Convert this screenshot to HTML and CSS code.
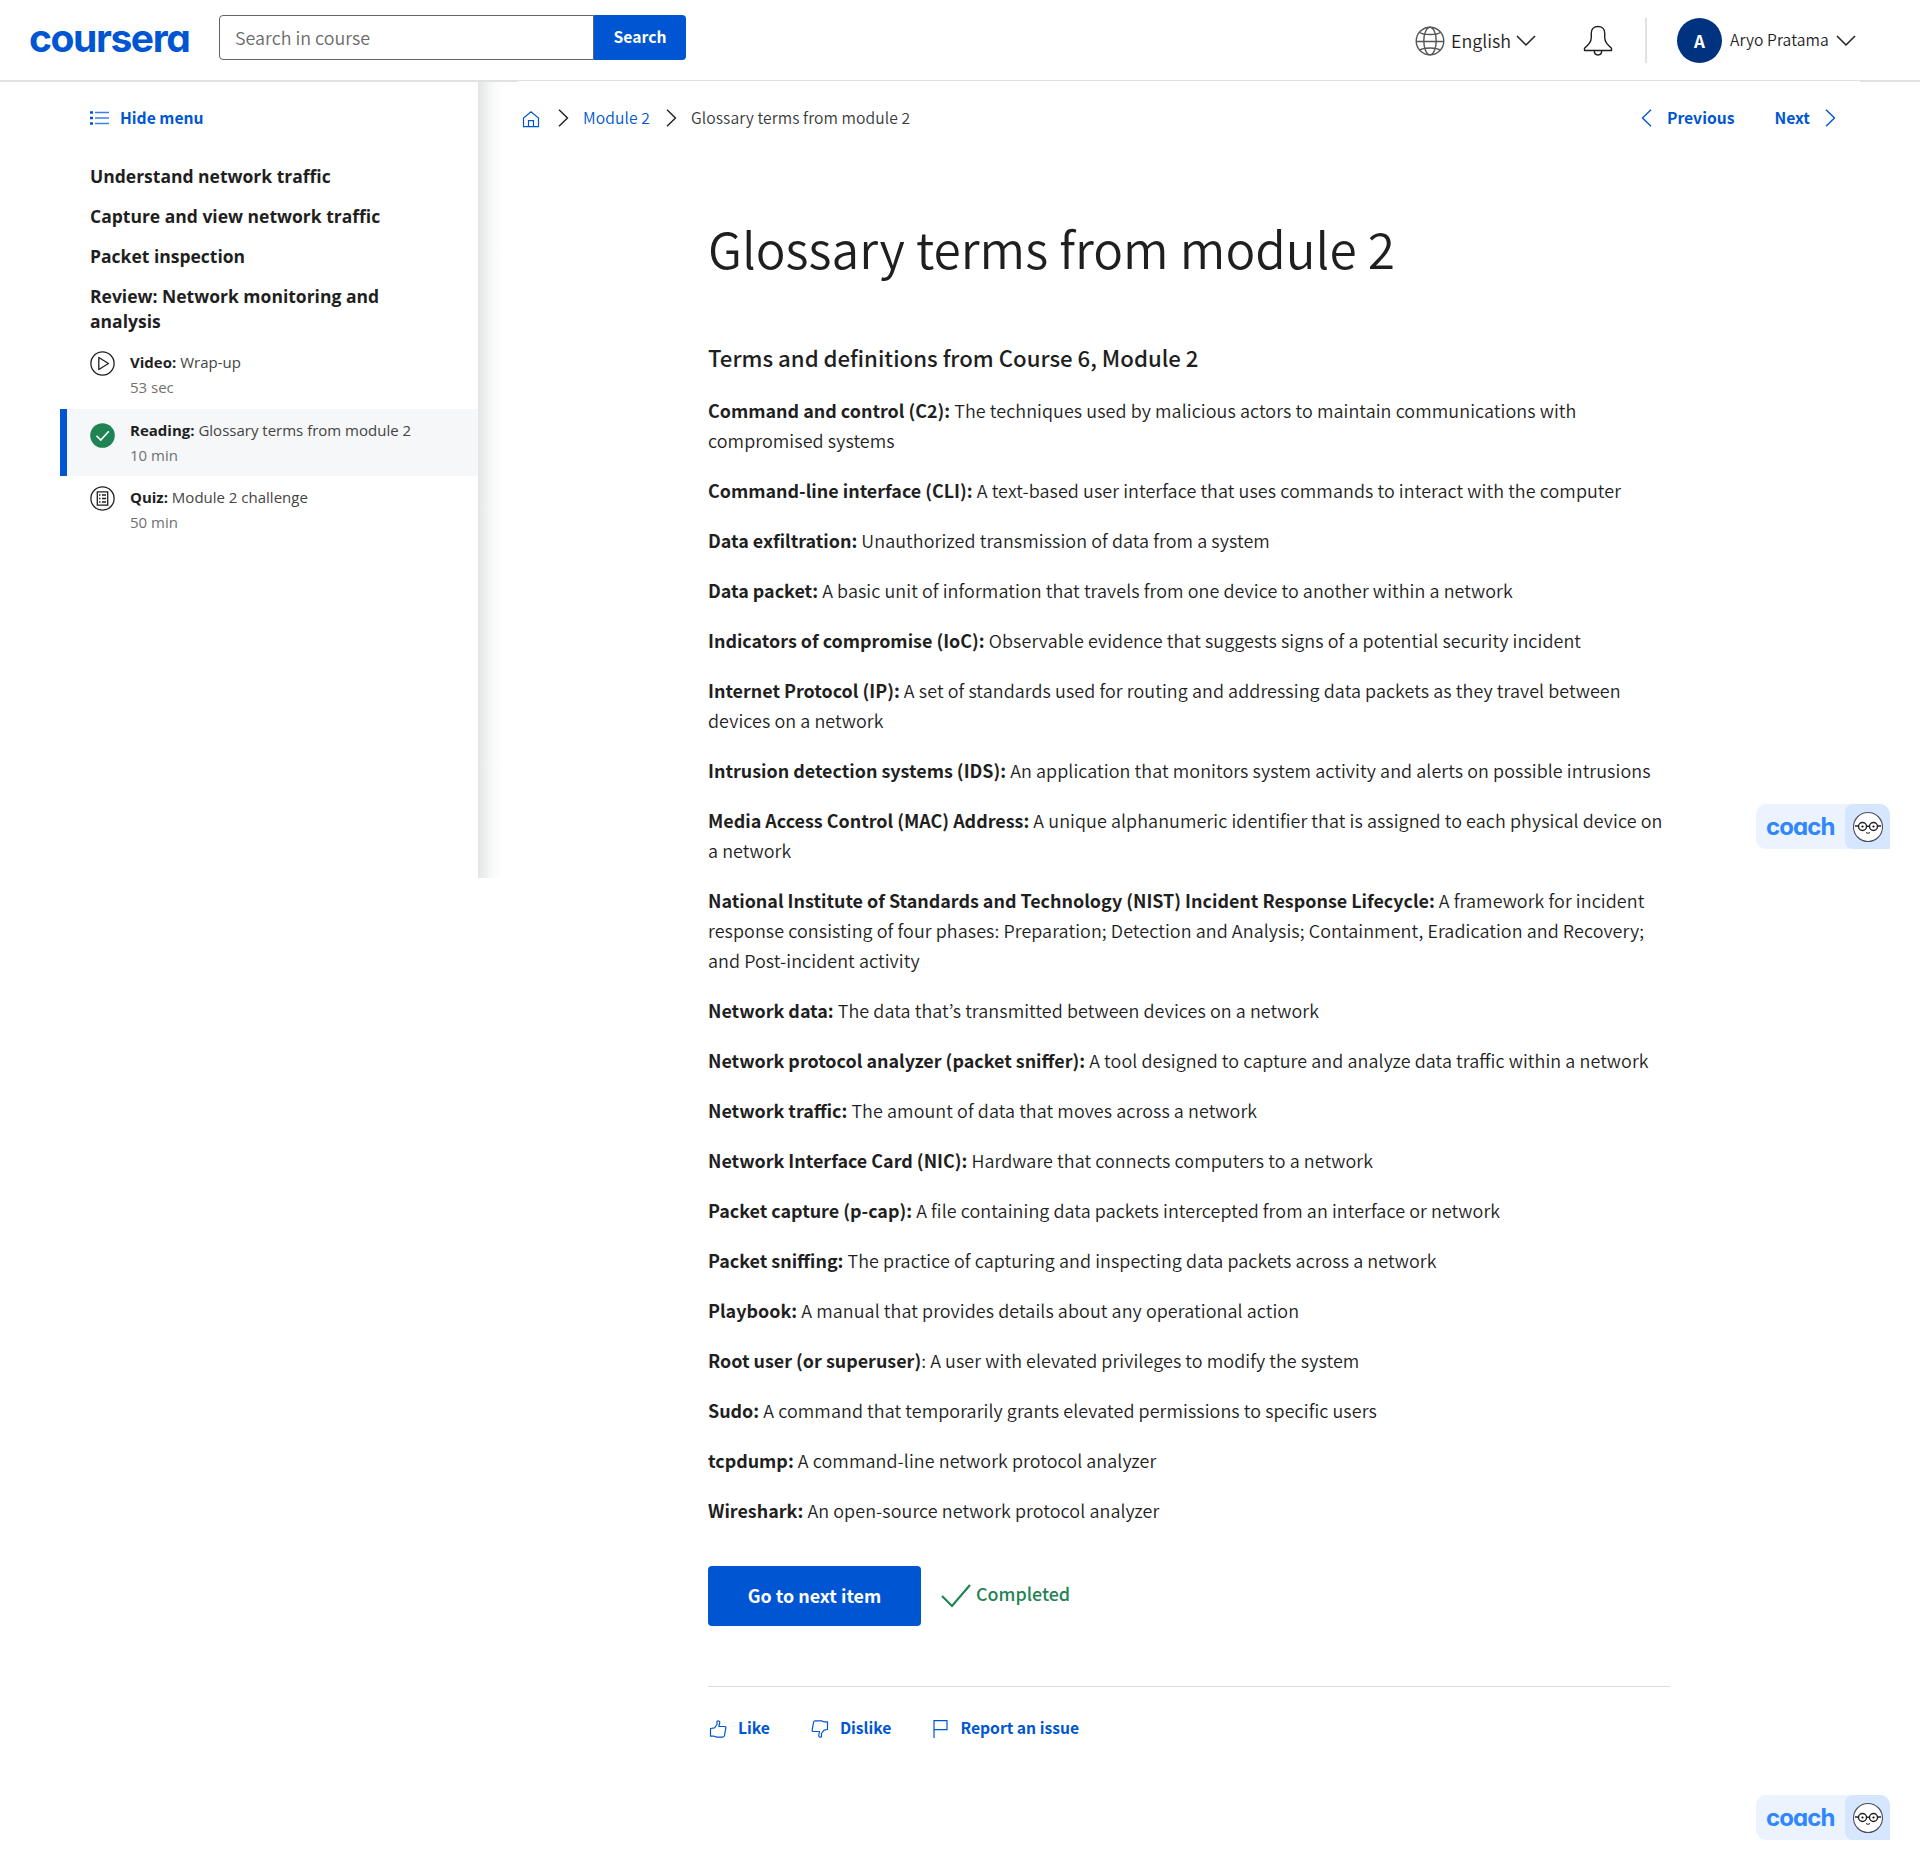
FILE: index.html
```html
<!DOCTYPE html>
<html lang="en">
<head>
<meta charset="utf-8">
<title>Glossary terms from module 2 | Coursera</title>
<link rel="stylesheet" href="styles.css">
</head>
<body>
<header class="topbar">
  <a class="logo">coursera</a>
  <form class="search">
    <div class="search-input">Search in course</div>
    <div class="search-btn">Search</div>
  </form>
  <div class="tools">
    <svg class="globe" width="30" height="30" viewBox="0 0 30 30"><g fill="none" stroke="#555" stroke-width="1.4"><circle cx="15" cy="15" r="13.8"/><ellipse cx="15" cy="15" rx="6.2" ry="13.8"/><path d="M1.2 15.5h27.6M4.5 6.2C8 9.3 22 9.3 25.5 6.2M4.5 24.3C8 21.200 22 21.200 25.500 24.300"/></g></svg>
    <span class="lang">English</span>
    <svg class="chev-lang" width="20" height="12" viewBox="0 0 20 12"><path d="M1 1l9 9 9-9" fill="none" stroke="#1f1f1f" stroke-width="1.5"/></svg>
    <svg class="bell" width="30" height="32" viewBox="0 0 30 32"><path d="M1.500 25.500v-2.300C5.500 19.500 8.300 17 8.300 12.500V8c0-3.800 2.700-6.500 6.700-6.500S21.700 4.200 21.700 8v4.500c0 4.500 2.800 7 6.800 10.700v2.300zM11.300 25.500c0 3 1.500 4.500 3.700 4.500s3.700-1.500 3.700-4.500" fill="none" stroke="#1f1f1f" stroke-width="1.400" stroke-linejoin="round"/></svg>
    <span class="divider"></span>
    <span class="avatar">A</span>
    <span class="user">Aryo Pratama</span>
    <svg class="chev-user" width="20" height="12" viewBox="0 0 20 12"><path d="M1 1l9 9 9-9" fill="none" stroke="#1f1f1f" stroke-width="1.5"/></svg>
  </div>
</header>
<div class="layout">
  <aside class="sidebar">
    <div class="hide-menu">
      <svg width="19" height="14" viewBox="0 0 19 14"><path d="M5 1.500h14M5 7h14M5 12.500h14" stroke="#3f80e1" stroke-width="1.600"/><path d="M0 1.500h3M0 7h3M0 12.500h3" stroke="#0056d2" stroke-width="2.400"/></svg>
      <span>Hide menu</span>
    </div>
    <nav class="lessons">
      <h2>Understand network traffic</h2>
      <h2>Capture and view network traffic</h2>
      <h2>Packet inspection</h2>
      <h2>Review: Network monitoring and analysis</h2>
    </nav>
    <ul class="items">
      <li class="item">
        <svg width="25" height="25" viewBox="0 0 25 25"><g fill="none" stroke="#1f1f1f" stroke-width="1.300"><circle cx="12.500" cy="12.500" r="11.600"/><path d="M8.800 6.500v12l9.700-6z" stroke-linejoin="round"/></g></svg>
        <div><p><b>Video:</b> Wrap-up</p><p class="time">53 sec</p></div>
      </li>
      <li class="item active">
        <svg width="25" height="25" viewBox="0 0 25 25"><circle cx="12.500" cy="12.500" r="12.300" fill="#1f8354"/><path d="M6.500 12.800l4.300 4.200 8-8.700" fill="none" stroke="#fff" stroke-width="1.600"/></svg>
        <div><p><b>Reading:</b> Glossary terms from module 2</p><p class="time">10 min</p></div>
      </li>
      <li class="item">
        <svg width="25" height="25" viewBox="0 0 25 25"><g fill="none" stroke="#1f1f1f" stroke-width="1.300"><circle cx="12.500" cy="12.500" r="11.600"/><path d="M7.300 5.800h10.400v13.400H7.300zM9 9h1.500M9 12.500h1.500M9 16h1.500M12 9h4M12 12.500h4M12 16h4"/></g></svg>
        <div><p><b>Quiz:</b> Module 2 challenge</p><p class="time">50 min</p></div>
      </li>
    </ul>
  </aside>
  <div class="edge"></div>
  <main class="main">
    <div class="crumbs">
      <svg class="home" width="18" height="18" viewBox="0 0 18 18"><path d="M1.500 16.700V8L9 1.800 16.500 8v8.700zM6.500 16.700v-6h5v6" fill="none" stroke="#0056d2" stroke-width="1.200"/></svg>
      <svg class="sep1" width="11" height="18" viewBox="0 0 11 18"><path d="M1 .8L9.500 9 1 17.200" fill="none" stroke="#1f1f1f" stroke-width="1.400"/></svg>
      <a class="mod">Module 2</a>
      <svg class="sep2" width="11" height="18" viewBox="0 0 11 18"><path d="M1 .8L9.500 9 1 17.200" fill="none" stroke="#1f1f1f" stroke-width="1.400"/></svg>
      <span class="here">Glossary terms from module 2</span>
      <a class="prev"><svg width="11" height="18" viewBox="0 0 11 18"><path d="M10 .8L1.500 9 10 17.200" fill="none" stroke="#0056d2" stroke-width="1.400"/></svg><span>Previous</span></a>
      <a class="next"><span>Next</span><svg width="11" height="18" viewBox="0 0 11 18"><path d="M1 .8L9.500 9 1 17.200" fill="none" stroke="#0056d2" stroke-width="1.400"/></svg></a>
    </div>
    <article class="article">
      <h1>Glossary terms from module 2</h1>
      <h3>Terms and definitions from Course 6, Module 2</h3>
      <div class="terms">
        <p><b>Command and control (C2):</b> The techniques used by malicious actors to maintain communications with<br>compromised systems</p>
        <p><b>Command-line interface (CLI):</b> A text-based user interface that uses commands to interact with the computer</p>
        <p><b>Data exfiltration:</b> Unauthorized transmission of data from a system</p>
        <p><b>Data packet:</b> A basic unit of information that travels from one device to another within a network</p>
        <p><b>Indicators of compromise (IoC):</b> Observable evidence that suggests signs of a potential security incident</p>
        <p><b>Internet Protocol (IP):</b> A set of standards used for routing and addressing data packets as they travel between<br>devices on a network</p>
        <p><b>Intrusion detection systems (IDS):</b> An application that monitors system activity and alerts on possible intrusions</p>
        <p><b>Media Access Control (MAC) Address:</b> A unique alphanumeric identifier that is assigned to each physical device on<br>a network</p>
        <p><b>National Institute of Standards and Technology (NIST) Incident Response Lifecycle:</b> A framework for incident<br>response consisting of four phases: Preparation; Detection and Analysis; Containment, Eradication and Recovery;<br>and Post-incident activity</p>
        <p><b>Network data:</b> The data that’s transmitted between devices on a network</p>
        <p><b>Network protocol analyzer (packet sniffer):</b> A tool designed to capture and analyze data traffic within a network</p>
        <p><b>Network traffic:</b> The amount of data that moves across a network</p>
        <p><b>Network Interface Card (NIC):</b> Hardware that connects computers to a network</p>
        <p><b>Packet capture (p-cap):</b> A file containing data packets intercepted from an interface or network</p>
        <p><b>Packet sniffing:</b> The practice of capturing and inspecting data packets across a network</p>
        <p><b>Playbook:</b> A manual that provides details about any operational action</p>
        <p><b>Root user (or superuser)</b>: A user with elevated privileges to modify the system</p>
        <p><b>Sudo:</b> A command that temporarily grants elevated permissions to specific users</p>
        <p><b>tcpdump:</b> A command-line network protocol analyzer</p>
        <p><b>Wireshark:</b> An open-source network protocol analyzer</p>
      </div>
      <div class="actions">
        <div class="go">Go to next item</div>
        <svg width="30" height="26" viewBox="0 0 30 26"><path d="M1 13l10 10L29 2" fill="none" stroke="#1f8354" stroke-width="2.200"/></svg>
        <span class="done">Completed</span>
      </div>
      <div class="feedback">
        <a class="like"><svg width="18" height="20" viewBox="0 0 18 20"><path d="M1.500 9.500L5.500 8.800 8 5.500V2.300C9.800 1 11 2.500 10.700 4L9.800 7.500h6c1 .2 1.200.9 1 1.700l-1.300 7.300c-.2 1-.8 1.500-1.800 1.600H7.500L5 17.200H1.500z" fill="none" stroke="#0056d2" stroke-width="1.200" stroke-linejoin="round"/></svg><span>Like</span></a>
        <a class="dislike"><svg width="18" height="20" viewBox="0 0 18 20"><path d="M16.500 10.500L13 11.200 10.500 14.500V17.700C8.700 19 7.500 17.500 7.800 16L8.500 12.500H2.200c-1-.2-1.200-.9-1-1.700L2.500 3.500c.2-1 .8-1.500 1.800-1.600H10.500L13 2.800H16.500z" fill="none" stroke="#0056d2" stroke-width="1.200" stroke-linejoin="round"/></svg><span>Dislike</span></a>
        <a class="report"><svg width="16" height="20" viewBox="0 0 16 20"><path d="M1 19V1.600h13v9H1" fill="none" stroke="#0056d2" stroke-width="1.200"/></svg><span>Report an issue</span></a>
      </div>
    </article>
  </main>
</div>
<div class="coach coach-mid"><span class="coach-label">coach</span><span class="coach-face"><svg width="32" height="32" viewBox="0 0 32 32"><circle cx="16" cy="16" r="14.500" fill="#fff" stroke="#4a4f63" stroke-width="1.100"/><g fill="none" stroke="#222" stroke-width="1.400"><circle cx="10.500" cy="15.500" r="4"/><circle cx="21.500" cy="15.500" r="4"/><path d="M14.500 15.200h3M3 15h3.500M25.500 15H29"/></g><path d="M14 21.500q2 1.800 4 0" fill="none" stroke="#222" stroke-width="1"/><circle cx="10.500" cy="15.500" r="1.100"/><circle cx="21.500" cy="15.500" r="1.100"/></svg></span></div>
<div class="coach coach-end"><span class="coach-label">coach</span><span class="coach-face"><svg width="32" height="32" viewBox="0 0 32 32"><circle cx="16" cy="16" r="14.500" fill="#fff" stroke="#4a4f63" stroke-width="1.100"/><g fill="none" stroke="#222" stroke-width="1.400"><circle cx="10.500" cy="15.500" r="4"/><circle cx="21.500" cy="15.500" r="4"/><path d="M14.500 15.200h3M3 15h3.500M25.500 15H29"/></g><path d="M14 21.500q2 1.800 4 0" fill="none" stroke="#222" stroke-width="1"/><circle cx="10.500" cy="15.500" r="1.100"/><circle cx="21.500" cy="15.500" r="1.100"/></svg></span></div>
</body>
</html>
```
FILE: styles.css
```css
* { box-sizing: border-box; }
body {
  margin: 0;
  position: relative;
  width: 1920px;
  height: 1870px;
  overflow: hidden;
  background: #fff;
  color: #1f1f1f;
  font-family: "Noto Sans CJK KR", "Noto Sans", sans-serif;
  font-size: 15.67px;
  font-weight: 350;
}
h1, h2, h3, p, ul { margin: 0; padding: 0; font-weight: inherit; }
b { font-weight: 700; letter-spacing: 0; }
li { list-style: none; }
svg { display: block; flex: none; }
span, a { white-space: nowrap; }

.topbar { display: flex; height: 81px; border-bottom: 1px solid #e1e1e1; padding-left: 29px; }
.logo {
  width: 190px;
  padding-top: 14px;
  line-height: 48px;
  font-family: Inter, sans-serif;
  font-size: 39px;
  font-weight: 700;
  letter-spacing: -1.4px;
  font-feature-settings: "cv11";
  color: #0056d2;
}
.search { display: flex; margin-top: 15px; width: 467px; height: 45px; }
.search-input {
  width: 375px;
  padding-left: 15px;
  line-height: 42px;
  border: 1px solid #636363;
  border-radius: 4px 0 0 4px;
  font-size: 17.9px;
  color: #6b6b6b;
}
.search-btn {
  flex: 1;
  line-height: 44px;
  text-align: center;
  background: #0056d2;
  border-radius: 0 4px 4px 0;
  color: #fff;
  font-weight: 700;
}
.tools { display: flex; align-items: center; height: 81px; margin-left: 729px; }
.lang { margin-left: 6px; width: 65px; font-size: 17.9px; padding-bottom: 1px; }
.bell { margin-left: 47px; }
.divider { width: 2px; height: 45px; margin-left: 32px; background: #e1e1e1; }
.avatar {
  width: 45px;
  height: 45px;
  margin: 0 8px 0 30px;
  border-radius: 50%;
  background: #00337f;
  color: #fff;
  font-weight: 700;
  font-size: 17px;
  line-height: 45px;
  text-align: center;
}
.user { width: 106px; padding-bottom: 2px; letter-spacing: 0.08px; }

.layout {
  display: flex;
  background:
    linear-gradient(#e1e1e1, #e1e1e1) 0 0 / 518px 1px no-repeat,
    linear-gradient(#e1e1e1, #e1e1e1) 1860px 0 / 60px 1px no-repeat;
}
.sidebar {
  width: 478px;
  height: 797px;
  padding-top: 22px;
}
.edge {
  width: 26px;
  height: 796px;
  margin-top: 1px;
  background: linear-gradient(to right, #e3e6e6, #eff1f1 30%, #fafafa 60%, #fff);
}
.hide-menu {
  display: flex;
  align-items: center;
  gap: 11px;
  height: 28px;
  padding-left: 90px;
  color: #0056d2;
  font-weight: 700;
}
.hide-menu svg { margin-top: 2px; }
.lessons {
  display: flex;
  flex-direction: column;
  gap: 15px;
  padding: 33px 60px 0 90px;
  font-family: "Open Sans", sans-serif;
}
.lessons h2 { font-size: 17.5px; line-height: 25px; font-weight: 700; }
.items { padding: 8px 0 0 60px; }
.item {
  display: flex;
  gap: 15px;
  height: 67px;
  padding: 8px 0 0 30px;
  font: 15px/25px "Open Sans", sans-serif;
  color: #444;
}
.item b { font-weight: 700; color: #1f1f1f; }
.item .time { color: #707070; }
.item svg { margin-top: 1px; }
.item.active { padding-top: 9px; padding-left: 23px; background: #f5f7f8; border-left: 7px solid #0056d2; }
.item.active svg { margin-top: 5px; }
.item:last-child { padding-top: 9px; }

.main { width: 1416px; }
.crumbs { display: flex; align-items: center; height: 74px; padding-left: 18px; }
.crumbs a, .crumbs span { padding-bottom: 1px; }
.crumbs a { color: #0056d2; }
.home { margin-top: 2px; }
.sep1 { margin-left: 18px; }
.mod { margin-left: 14px; width: 83px; letter-spacing: 0.1px; }
.here { margin-left: 14px; width: 950px; color: #373a3c; letter-spacing: 0.08px; }
.prev, .next { display: flex; align-items: center; gap: 15px; font-weight: 700; }
.next { margin-left: 40px; }
.article { width: 1166px; padding: 57px 0 0 204px; }
h1 { font-size: 49.6px; line-height: 70px; }
h3 { margin-top: 59px; font-size: 22.2px; line-height: 32px; font-weight: 500; }
.terms {
  display: flex;
  flex-direction: column;
  gap: 20px;
  margin-top: 22px;
  font-size: 17.91px;
  line-height: 30px;
  letter-spacing: 0.088px;
  font-feature-settings: "liga" 1;
  white-space: nowrap;
}
.actions { display: flex; align-items: center; height: 60px; margin-top: 41px; font-size: 17.9px; }
.go {
  width: 213px;
  margin-right: 20px;
  line-height: 58px;
  height: 60px;
  text-align: center;
  background: #0056d2;
  border-radius: 4px;
  color: #fff;
  font-weight: 700;
}
.done { margin-left: 5px; padding-bottom: 6px; color: #1f8354; font-weight: 500; }
.feedback { display: flex; margin-top: 60px; padding-top: 26px; border-top: 1px solid #dadcdc; width: 962px; color: #0056d2; font-weight: 700; }
.feedback a { display: flex; align-items: center; height: 30px; gap: 11px; }
.feedback span { padding-bottom: 1px; }
.feedback svg { margin-top: 1px; }
.like { margin-left: 1px; }
.dislike { margin-left: 41px; }
.report { margin-left: 42px; }

.coach {
  position: absolute;
  left: 1756px;
  display: flex;
  width: 134px;
  height: 45px;
  border-radius: 10px 10px 0 10px;
  background: #ebf3ff;
  overflow: hidden;
}
.coach-mid { top: 804px; }
.coach-end { top: 1795px; }
.coach-label {
  width: 89px;
  padding-left: 10px;
  line-height: 46px;
  font-family: Inter, sans-serif;
  font-size: 24px;
  font-weight: 700;
  letter-spacing: -0.9px;
  font-feature-settings: "cv11";
  color: #2f86ff;
}
.coach-face { display: flex; align-items: center; justify-content: center; width: 45px; border-radius: 8px 0 0 8px; background: #d6e6ff; }
```
